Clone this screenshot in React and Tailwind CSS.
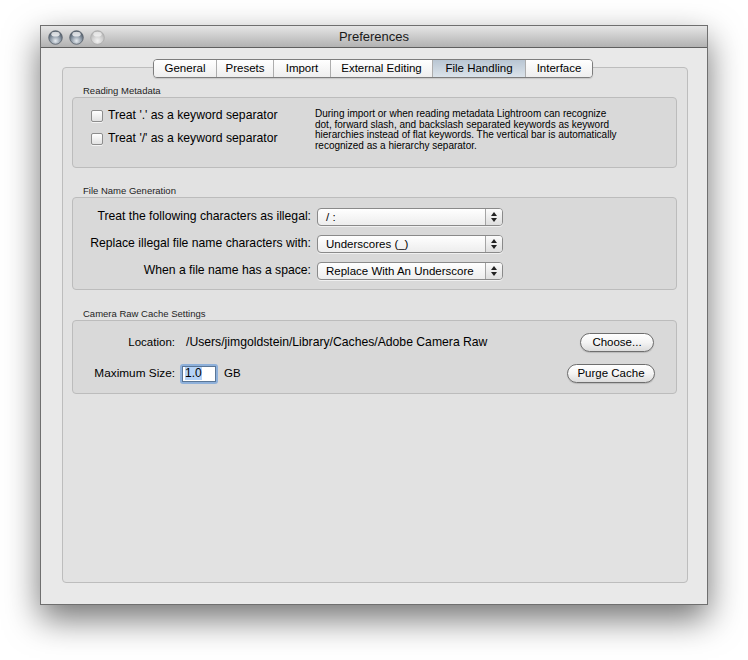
import React from 'react'

function Light({ dim }) {
  const id = dim ? 'lg-dim' : 'lg-on'
  return (
    <svg width="15" height="15" viewBox="0 0 15 15">
      <defs>
        <radialGradient id={id} cx="50%" cy="75%" r="65%">
          <stop offset="0%" stopColor={dim ? '#f2f2f2' : '#e8edf2'} />
          <stop offset="60%" stopColor={dim ? '#cfcfcf' : '#8a96a3'} />
          <stop offset="100%" stopColor={dim ? '#b4b4b4' : '#505b68'} />
        </radialGradient>
      </defs>
      <circle cx="7.5" cy="7.5" r="6.8" fill={`url(#${id})`} stroke={dim ? '#a9a9a9' : '#58616b'} strokeWidth="0.8" />
      <ellipse cx="7.5" cy="4.2" rx="4.2" ry="2.4" fill="#fff" opacity={dim ? 0.6 : 0.75} />
    </svg>
  )
}

function Checkbox() {
  return (
    <span className="block w-[12px] h-[12px] rounded-[2px] border border-[#8d8d8d] bg-linear-to-b from-white to-[#e2e2e2] shadow-[0_1px_0_rgba(255,255,255,0.7)]" />
  )
}

function Stepper() {
  return (
    <span className="w-[17px] border-l border-[#a4a4a4] flex flex-col items-center justify-center gap-[2px] bg-linear-to-b from-[#fbfbfb] to-[#dedede]">
      <svg width="6" height="4" viewBox="0 0 6 4"><path d="M3 0 L6 4 L0 4 Z" fill="#222" /></svg>
      <svg width="6" height="4" viewBox="0 0 6 4"><path d="M0 0 L6 0 L3 4 Z" fill="#222" /></svg>
    </span>
  )
}

function Select({ value }) {
  return (
    <div className="flex w-[186px] h-[18px] rounded-[4px] border border-[#8a8a8a] bg-linear-to-b from-white to-[#ededed] overflow-hidden shadow-[0_1px_0_rgba(255,255,255,0.6)]">
      <span className="flex-1 pl-[8px] text-[11.5px] leading-[16px] text-black">{value}</span>
      <Stepper />
    </div>
  )
}

function PillButton({ label, width }) {
  return (
    <button className={`${width} h-[19px] rounded-full border border-[#6e6e6e] bg-linear-to-b from-white via-[#f4f4f4] to-[#dcdcdc] text-[11.5px] leading-[17px] text-black shadow-[0_1px_1px_rgba(0,0,0,0.15)]`}>
      {label}
    </button>
  )
}

function Group({ title, className, children }) {
  return (
    <div className={className}>
      <div className="pl-[11px] h-[12px] text-[9.5px] leading-[12px] text-[#1e1e1e]">{title}</div>
      {children}
    </div>
  )
}

const TABS = [
  { label: 'General', w: 'w-[62px]' },
  { label: 'Presets', w: 'w-[57px]' },
  { label: 'Import', w: 'w-[57px]' },
  { label: 'External Editing', w: 'w-[102px]' },
  { label: 'File Handling', w: 'w-[93px]', active: true },
  { label: 'Interface', w: 'w-[67px]' },
]

export default function App() {
  return (
    <div className="w-[748px] h-[660px] bg-white overflow-hidden pt-[25px] pl-[40px] [font-family:'Liberation_Sans',Arial,sans-serif]">
      <div className="w-[668px] h-[580px] border border-[#6f6f6f] bg-[#e9e9e9] shadow-[0_14px_32px_rgba(0,0,0,0.55)] flex flex-col">
        {/* title bar */}
        <div className="h-[22px] shrink-0 grid grid-cols-[1fr_auto_1fr] items-center border-b border-[#5f5f5f] bg-linear-to-b from-[#e6e6e6] to-[#b2b2b2]">
          <div className="flex items-center gap-[6px] pl-[7px]">
            <Light />
            <Light />
            <Light dim />
          </div>
          <div className="text-[13px] leading-[22px] text-[#1a1a1a]">Preferences</div>
          <div />
        </div>

        {/* body */}
        <div className="flex-1 pt-[11px]">
          <div className="relative z-10 flex justify-center pr-[2px]">
            <div className="flex h-[19px] rounded-[4px] border border-[#7d7d7d] overflow-hidden shadow-[0_1px_1px_rgba(0,0,0,0.12)]">
              {TABS.map((t, i) => (
                <div
                  key={t.label}
                  className={`${t.w} flex items-center justify-center text-[11.5px] leading-[17px] text-black ${i > 0 ? 'border-l border-[#adadad]' : ''} ${t.active ? 'bg-linear-to-b from-[#b9c6d3] to-[#dbe3ea]' : 'bg-linear-to-b from-white to-[#eeeeee]'}`}
                >
                  {t.label}
                </div>
              ))}
            </div>
          </div>

          <div className="-mt-[11px] ml-[21px] w-[626px] h-[516px] rounded-[4px] border border-[#bdbdbd] bg-[#e2e2e2] pt-[17px] pl-[9px] pr-[10px]">
            <Group title="Reading Metadata">
              <div className="h-[71px] rounded-[4px] border border-[#bcbcbc] bg-[#d9d9d9] flex pl-[18px]">
                <div className="w-[224px] pt-[6px] flex flex-col">
                  {["Treat '.' as a keyword separator", "Treat '/' as a keyword separator"].map(s => (
                    <label key={s} className="h-[23px] flex items-center gap-[5px] text-[12.2px] text-black">
                      <Checkbox />
                      <span>{s}</span>
                    </label>
                  ))}
                </div>
                <p className="pt-[11px] w-[305px] text-[10px] leading-[10.7px] text-black">
                  During import or when reading metadata Lightroom can recognize dot, forward slash, and backslash separated keywords as keyword hierarchies instead of flat keywords. The vertical bar is automatically recognized as a hierarchy separator.
                </p>
              </div>
            </Group>

            <Group title="File Name Generation" className="mt-[17px]">
              <div className="h-[93px] rounded-[4px] border border-[#bcbcbc] bg-[#d9d9d9] pt-[5px]">
                {[
                  ['Treat the following characters as illegal:', '/ :'],
                  ['Replace illegal file name characters with:', 'Underscores (_)'],
                  ['When a file name has a space:', 'Replace With An Underscore'],
                ].map(([label, value]) => (
                  <div key={label} className="h-[27px] grid grid-cols-[238px_186px] gap-x-[6px] items-center">
                    <span className="text-right text-[12.2px] text-black">{label}</span>
                    <Select value={value} />
                  </div>
                ))}
              </div>
            </Group>

            <Group title="Camera Raw Cache Settings" className="mt-[18px]">
              <div className="h-[74px] rounded-[4px] border border-[#bcbcbc] bg-[#d9d9d9] pt-[6px]">
                <div className="h-[31px] flex items-center">
                  <span className="w-[102px] text-right text-[11.5px] text-black">Location:</span>
                  <span className="ml-[11px] text-[12.2px] text-black">/Users/jimgoldstein/Library/Caches/Adobe Camera Raw</span>
                  <div className="flex-1" />
                  <PillButton label="Choose..." width="w-[74px]" />
                  <div className="w-[22px]" />
                </div>
                <div className="h-[31px] flex items-center">
                  <span className="w-[102px] text-right text-[11.8px] text-black">Maximum Size:</span>
                  <div className="ml-[5px] w-[38px] h-[20px] rounded-[3px] p-[2px] bg-[#8eb0da]">
                    <div className="h-full border border-[#5a7696] bg-white pl-[2px] flex items-center">
                      <span className="bg-[#b5d3f7] text-[12px] leading-[13px] text-black">1.0</span>
                    </div>
                  </div>
                  <span className="ml-[6px] text-[11.5px] text-black">GB</span>
                  <div className="flex-1" />
                  <PillButton label="Purge Cache" width="w-[88px]" />
                  <div className="w-[21px]" />
                </div>
              </div>
            </Group>
          </div>
        </div>
      </div>
    </div>
  )
}
